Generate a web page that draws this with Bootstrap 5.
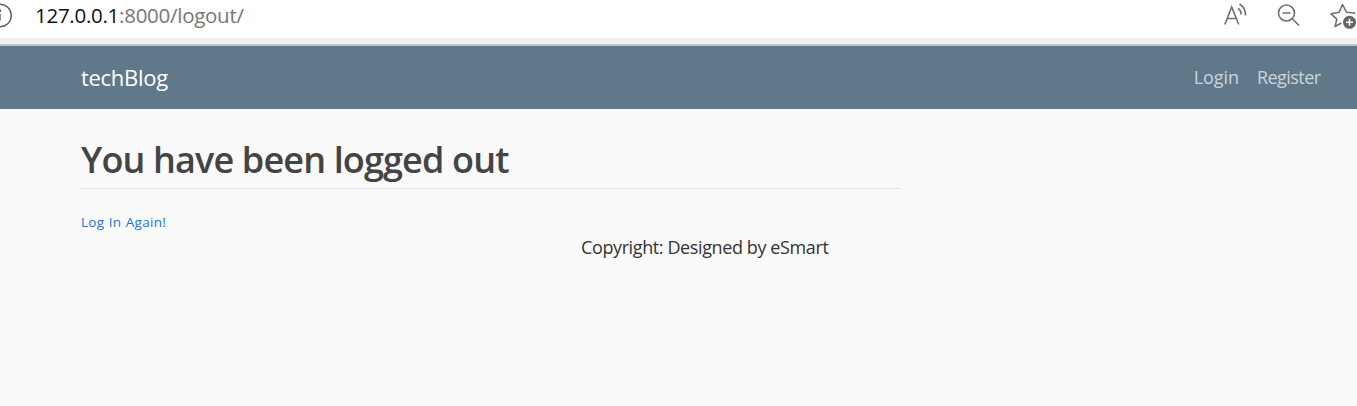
<!DOCTYPE html>
<html lang="en">
<head>
<meta charset="utf-8">
<meta name="viewport" content="width=device-width, initial-scale=1">
<title>techBlog</title>
<link href="https://cdn.jsdelivr.net/npm/bootstrap@5.3.0/dist/css/bootstrap.min.css" rel="stylesheet">
<style>
body { font-family: "Open Sans", "Noto Sans", sans-serif; font-size: 18px; background: #fafafa; color: #333; overflow: hidden; }
.browser-bar { height: 38px; background: #fff; color: #767676; }
.address { font-size: 20.5px; line-height: 30px; margin-left: 22px; letter-spacing: -.27px; }
.address b { font-weight: 400; color: #111; }
.bar-edge { height: 8px; background: #f3f1f0; border-bottom: 2px solid #c3c6c8; }
.info-icon { margin-left: -13px; }
.tools { gap: 27px; margin-right: -1px; }
.bg-steel { background: #5f788a; height: 63px; }
.steel-inner { padding-left: 81px; padding-right: 37px; }
.brand { font-size: 22px; letter-spacing: -.3px; color: #fff; }
.top-links { gap: 18px; }
.top-links a { color: #cbd5db; letter-spacing: -.1px; }
.top-links a + a { letter-spacing: -.55px; margin-right: -.5px; }
.page-main { margin-left: 81px; width: 820px; padding-top: 28px; }
.page-title { font-size: 36px; line-height: 46px; font-weight: 600; color: #444; border-bottom: 1px solid #dee2e6; padding-bottom: 5px; letter-spacing: -.86px; }
.again { font-size: 13.5px; line-height: 20px; color: #1a73e8; margin-top: 23px; letter-spacing: .3px; word-spacing: .5px; }
.foot { margin-left: 581px; line-height: 28px; margin-top: 1px; letter-spacing: -.39px; }
</style>
</head>
<body>
<div class="browser-bar d-flex justify-content-between">
  <div class="d-flex align-items-start">
    <svg class="info-icon" width="26" height="32" viewBox="0 0 26 32" fill="none" stroke="#666" stroke-width="1.5"><circle cx="13" cy="15.500" r="11.3"/><path d="M13 14V20.500"/><circle cx="13" cy="10.7" r=".6" fill="#666"/></svg>
    <span class="address"><b>127.0.0.1</b>:8000/logout/</span>
  </div>
  <div class="tools d-flex">
    <svg width="26" height="32" viewBox="0 0 26 32" fill="none" stroke="#707070" stroke-width="1.6"><path d="M.8 24.500 7.700 7l7 17.500M3.300 18.500h9M14 8.200c2.200 1.600 3.200 3.600 3.200 6.200M15.500 4c4.200 2.600 6.200 6 6 11.500"/></svg>
    <svg width="26" height="32" viewBox="0 0 26 32" fill="none" stroke="#707070" stroke-width="1.6"><circle cx="9.500" cy="13" r="8"/><path d="M5.500 13h8M15.300 18.800l6.700 6.700"/></svg>
    <svg width="28" height="32" viewBox="0 0 28 32" fill="none" stroke="#707070" stroke-width="1.6" stroke-linejoin="round"><path d="M24.500 14V13L16.500 12.200 12.500 4.500 9 12.300 1 13.800 6.800 19.200 5 26.500 11.500 23"/><circle cx="19.500" cy="22.300" r="6.500" fill="#666" stroke="none"/><path d="M19.500 18.800v7M16 22.300h7" stroke="#fff"/></svg>
  </div>
</div>
<div class="bar-edge"></div>
<nav class="navbar bg-steel p-0">
  <div class="steel-inner d-flex w-100 justify-content-between align-items-center">
    <a class="brand text-decoration-none" href="#">techBlog</a>
    <div class="top-links d-flex">
      <a class="text-decoration-none" href="#">Login</a>
      <a class="text-decoration-none" href="#">Register</a>
    </div>
  </div>
</nav>
<main class="page-main">
  <h2 class="page-title mb-0">You have been logged out</h2>
  <a class="again d-block text-decoration-none" href="#">Log In Again!</a>
</main>
<footer class="foot">Copyright: Designed by eSmart</footer>
</body>
</html>
